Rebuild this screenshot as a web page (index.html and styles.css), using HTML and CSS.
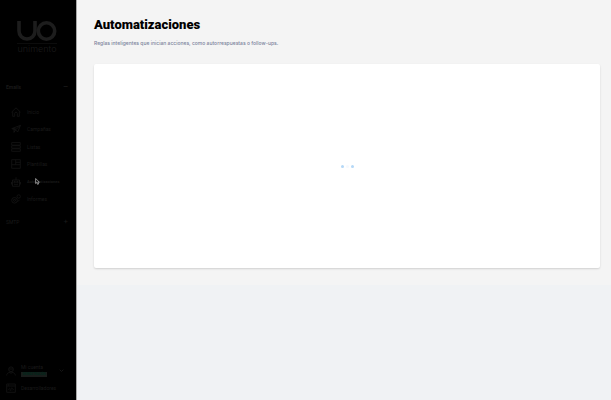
FILE: index.html
```html
<!DOCTYPE html>
<html lang="es">

<head>
  <meta charset="UTF-8">
  <meta name="viewport" content="width=device-width, initial-scale=1.0">
  <title>Automatizaciones</title>
  <link rel="stylesheet" href="styles.css">
</head>

<body>

  <!-- Sidebar -->
  <aside class="sidebar">
    <div class="logo">
      <svg class="logo-mark" viewBox="0 0 40 20" aria-hidden="true">
        <path d="M2 0v10a8 8 0 0 0 16 0V0" />
        <circle cx="29.500" cy="10" r="8.200" />
      </svg>
      <span class="logo-name">unimento</span>
    </div>

    <button type="button" class="group group-open"><span>Emails</span><span class="sign">–</span></button>

    <nav class="menu">
      <a href="#">
        <svg viewBox="0 0 10 10"><path d="M.5 5.200L5 .8l4.500 4.400M1.700 4.500v4.800h2V6.500a1.300 1.300 0 0 1 2.600 0v2.800h2V4.500" /></svg>
        Inicio
      </a>
      <a href="#">
        <svg viewBox="0 0 10 10"><path d="M.7 4.700L9.500 1.300 6.700 8 4.500 5.800zM4.500 5.800l5-4.500M3 5.400v3l1.500-2.600M2 4.200l3 1" /></svg>
        Campañas
      </a>
      <a href="#">
        <svg viewBox="0 0 10 10"><path d="M.7.600h8.600v2.500H.7zM.7 3.700h8.600v2.500H.7zM.7 6.800h8.600v2.500H.7z" /></svg>
        Listas
      </a>
      <a href="#">
        <svg viewBox="0 0 10 10"><path d="M.7.700h8.600v8.600H.7zM.7 5.700h8.600M4.700.7v5M4.700 3.300h4.600" /></svg>
        Plantillas
      </a>
      <a href="#" class="active">
        <svg viewBox="0 0 10 10"><path d="M5 .3V3M1.500 3h7v6.300h-7zM.5 5v2.500M9.500 5v2.500M3 4.500h1.300v1.300H3zM5.700 4.500H7v1.300H5.700zM3 7.700h4" /></svg>
        Automatizaciones
      </a>
      <a href="#">
        <svg viewBox="0 0 10 10"><circle cx="3.500" cy="6.300" r="2.800" /><circle cx="3.500" cy="6.300" r="1" /><circle cx="7.700" cy="2.500" r="1.700" /><path d="M6.500 7.800l2-2" /></svg>
        Informes
      </a>
    </nav>

    <button type="button" class="group"><span>SMTP</span><span class="sign">+</span></button>

    <div class="account">
      <button type="button" class="account-row">
        <svg viewBox="0 0 10 10"><circle cx="5" cy="3.300" r="2.400" /><path d="M2.700 3h4.600M.7 9.500c0-2 1.300-2.800 3.300-3.300L5 7.500l1-1.300c2 .5 3.300 1.300 3.300 3.300" /></svg>
        <span class="account-text">
          <span>Mi cuenta</span>
          <span class="badge">DEMOSTRACIÓN</span>
        </span>
        <svg class="chevron" viewBox="0 0 4 4"><path d="M.5 1.300L2 2.800l1.500-1.500" /></svg>
      </button>
      <a href="#" class="account-row">
        <svg viewBox="0 0 10 10"><path d="M.7 1h8.600v8.300H.7zM.7 3h8.600M2 2h1M3.800 5L2.600 6.200l1.200 1.200M6.200 5l1.200 1.200-1.200 1.200M5.400 4.700L4.600 7.700" /></svg>
        Desarrolladores
      </a>
    </div>

    <svg class="cursor" viewBox="0 0 5 7" aria-hidden="true"><path d="M.6.500v5l1.200-1 .8 1.900 1-.4-.8-1.900h1.600z" /></svg>
  </aside>

  <!-- Page content -->
  <main class="content">
    <section class="page">
      <h1>Automatizaciones</h1>
      <p>Reglas inteligentes que inician acciones, como autorrespuestas o follow-ups.</p>
      <div class="card">
        <div class="loader" role="status" aria-label="Cargando"><i></i><i></i><i></i></div>
      </div>
    </section>
  </main>

</body>

</html>
```

FILE: styles.css
```css
* {
  box-sizing: border-box;
}

body {
  display: flex;
  min-height: 100vh;
  margin: 0;
  background-color: #f0f2f4;
  font-family: Roboto, "Liberation Sans", sans-serif;
  font-size: 5px;
  line-height: 6px;
}

button {
  padding: 0;
  border: none;
  background: none;
  color: inherit;
  font: inherit;
  text-align: left;
  cursor: pointer;
}

a {
  color: inherit;
  text-decoration: none;
}

svg {
  flex: none;
  fill: none;
  stroke: #181818;
  stroke-width: 0.7;
}

/* Sidebar */
.sidebar {
  position: relative;
  display: flex;
  flex: none;
  flex-direction: column;
  width: 77px;
  padding: 21px 8px 7px 6px;
  border-right: 1px solid #a8a8a8;
  background-color: #000;
  color: #1a1a1a;
}

.logo {
  display: flex;
  flex-direction: column;
  align-items: center;
  width: 40px;
  margin: 0 0 30px 11px;
}

.logo-mark {
  width: 40px;
  height: 20px;
  stroke: #1d1d1d;
  stroke-width: 3.6;
}

.logo-name {
  width: 40px;
  margin-top: 2px;
  border-top: 1px solid #0c0c0c;
  color: #1b1b1b;
  font-family: Inter, sans-serif;
  font-size: 9px;
  font-weight: 300;
  line-height: 10px;
  text-align: center;
}

.group {
  display: flex;
  justify-content: space-between;
  height: 6px;
}

.group-open {
  font-weight: 700;
}

.sign {
  font-size: 8px;
}

.menu {
  display: flex;
  flex-direction: column;
  height: 105px;
  margin: 13px 0 11px 5px;
}

.menu a {
  display: flex;
  flex: 1;
  align-items: center;
  gap: 6px;
}

.menu svg {
  width: 10px;
  height: 10px;
}

.menu .active {
  font-size: 4px;
  font-weight: 700;
}

.account {
  display: flex;
  flex-direction: column;
  gap: 6px;
  margin-top: auto;
}

.account-row {
  display: flex;
  align-items: center;
  gap: 5px;
}

.account-row svg {
  width: 10px;
  height: 10px;
}

.account-text {
  display: flex;
  flex: 1;
  flex-direction: column;
  align-items: flex-start;
  gap: 2px;
}

.badge {
  width: 26px;
  background-color: #181c1a;
  color: #00281b;
  font-size: 3px;
  font-weight: 700;
  line-height: 5px;
  text-align: center;
}

.account-row .chevron {
  width: 5px;
  height: 5px;
  margin-right: 4px;
}

.cursor {
  position: absolute;
  top: 178px;
  left: 35px;
  width: 5px;
  height: 7px;
  fill: #111;
  stroke: #bbb;
}

/* Content */
.content {
  flex: 1;
}

.page {
  padding: 17px 11px 17px 17px;
  background-color: #f4f4f4;
}

h1 {
  margin: 0;
  color: #000;
  font-size: 13px;
  font-weight: 900;
  line-height: 16px;
}

p {
  margin: 7px 0 18px;
  color: #7b829b;
  font-family: Inter, "Liberation Sans", sans-serif;
  font-weight: 500;
}

.card {
  display: flex;
  align-items: center;
  justify-content: center;
  min-height: 204px;
  border-radius: 2px;
  background-color: #fff;
  box-shadow: 0 1px 2px rgba(0, 0, 0, 0.15);
}

.loader {
  display: flex;
  gap: 2px;
}

.loader i {
  width: 3px;
  height: 3px;
  border-radius: 50%;
  background-color: #b5d8f7;
}

.loader i:nth-child(2) {
  background-color: #f6f9fd;
}
```
